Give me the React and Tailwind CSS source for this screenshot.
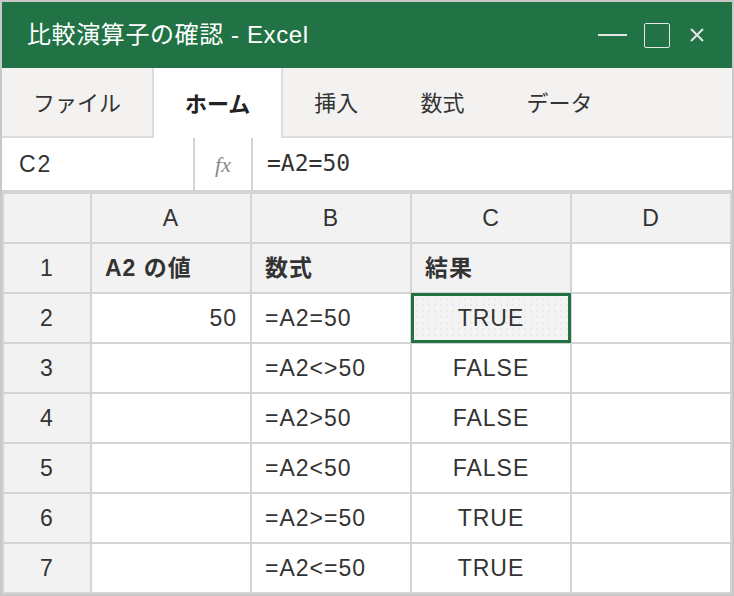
import React from 'react';

const sans = 'font-["Liberation_Sans","Noto_Sans_CJK_JP",sans-serif]';

const tabs = ['ファイル', 'ホーム', '挿入', '数式', 'データ'];

const rows = [
  { n: '1', a: 'A2 の値', b: '数式', c: '結果', head: true },
  { n: '2', a: '50', b: '=A2=50', c: 'TRUE', selected: true },
  { n: '3', a: '', b: '=A2<>50', c: 'FALSE' },
  { n: '4', a: '', b: '=A2>50', c: 'FALSE' },
  { n: '5', a: '', b: '=A2<50', c: 'FALSE' },
  { n: '6', a: '', b: '=A2>=50', c: 'TRUE' },
  { n: '7', a: '', b: '=A2<=50', c: 'TRUE' },
];

const App = () => {
  return (
    <div className={`w-[734px] h-[596px] border-2 border-[#c8c8c8] bg-white text-[#333] ${sans} flex flex-col`}>
      {/* title bar */}
      <div className="h-[66px] bg-[#217346] flex items-center pl-[25px] pr-[28px] text-white">
        <div className="text-[24px] tracking-[0.6px] flex-1">比較演算子の確認 - Excel</div>
        <div className="flex items-center">
          <div className="w-[29px] h-[2px] bg-[#e6e6e6]"></div>
          <div className="ml-[17px] w-[26px] h-[25px] border-[1.5px] border-[#e6e6e6] rounded-[2px]"></div>
          <svg className="ml-[20px]" width="14" height="14" viewBox="0 0 14 14">
            <path d="M1 1L13 13M13 1L1 13" stroke="#e6e6e6" strokeWidth="2" />
          </svg>
        </div>
      </div>

      {/* ribbon tabs */}
      <div className="h-[70px] bg-[#f3f2f1] border-b-2 border-[#dcdcdc] flex">
        {tabs.map((t, i) => (
          <div
            key={t}
            className={`px-[31px] pt-[3px] flex items-center text-[22px] ${
              i === 1 ? 'bg-white font-bold text-[#222] border-x-2 border-[#dcdcdc] -mb-[2px]' : 'text-[#333]'
            }`}
          >
            {t}
          </div>
        ))}
      </div>

      {/* formula bar */}
      <div className="h-[54px] flex border-b-2 border-[#d4d4d4]">
        <div className="w-[193px] flex items-center pl-[17px] text-[23px] tracking-[2px] border-r-2 border-[#d4d4d4]">C2</div>
        <div className="w-[58px] flex items-center justify-center border-r-2 border-[#d4d4d4] text-[#8a8a8a] italic text-[22px] font-['Liberation_Serif',serif]">
          fx
        </div>
        <div className="flex-1 flex items-start pt-[8px] pl-[14px] text-[23px] font-['DejaVu_Sans_Mono',monospace]">=A2=50</div>
      </div>

      {/* grid */}
      <div className="flex-1 bg-[#d4d4d4] p-[2px] grid grid-cols-[86px_158px_158px_158px_158px] grid-rows-[48px_repeat(7,48px)] gap-[2px] text-[23px] tracking-[1px]">
        <div className="bg-[#f2f2f2]"></div>
        {['A', 'B', 'C', 'D'].map((c) => (
          <div key={c} className="bg-[#f2f2f2] flex items-center justify-center">{c}</div>
        ))}
        {rows.map((r) => (
          <React.Fragment key={r.n}>
            <div className="bg-[#f2f2f2] flex items-center justify-center">{r.n}</div>
            <div className={`${r.head ? 'bg-[#f2f2f2] font-bold justify-start pl-[13px]' : 'bg-white justify-end pr-[13px]'} flex items-center`}>
              {r.a}
            </div>
            <div className={`${r.head ? 'bg-[#f2f2f2] font-bold' : 'bg-white'} flex items-center pl-[13px]`}>{r.b}</div>
            {r.selected ? (
              <div className="relative bg-[#f3f3f3] flex items-center justify-center">
                <div className="absolute -inset-x-[1px] -inset-y-[1px] border-[3px] border-[#217346] bg-[radial-gradient(circle,#dcdcdc_0.6px,transparent_0.8px)] bg-[length:6px_6px]"></div>
                <span className="relative">{r.c}</span>
              </div>
            ) : (
              <div className={`${r.head ? 'bg-[#f2f2f2] font-bold pl-[13px]' : 'bg-white justify-center'} flex items-center`}>{r.c}</div>
            )}
            <div className="bg-white"></div>
          </React.Fragment>
        ))}
      </div>
    </div>
  );
};

export default App;
